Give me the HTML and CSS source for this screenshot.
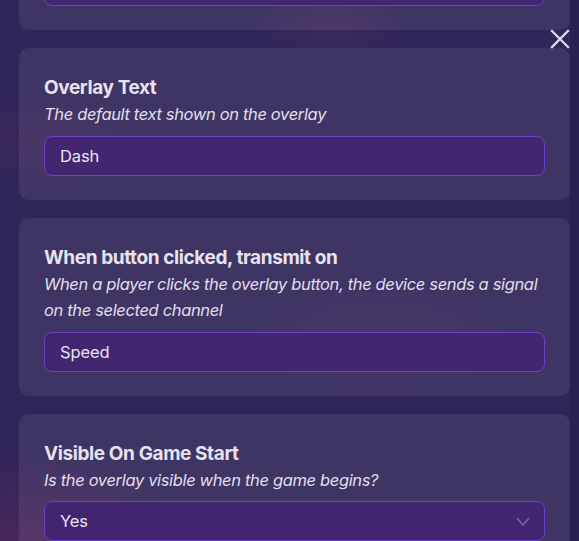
FILE: index.html
```html
<!DOCTYPE html>
<html lang="en">
<head>
<meta charset="utf-8">
<title>Overlay settings</title>
<link rel="stylesheet" href="styles.css">
</head>
<body>
<div class="page">
  <div class="scroll">
    <div class="list">
      <section class="card">
        <div class="field"></div>
      </section>
      <section class="card">
        <h2 class="title">Overlay Text</h2>
        <p class="desc">The default text shown on the overlay</p>
        <div class="field">Dash</div>
      </section>
      <section class="card">
        <h2 class="title">When button clicked, transmit on</h2>
        <p class="desc">When a player clicks the overlay button, the device sends a signal on the selected channel</p>
        <div class="field">Speed</div>
      </section>
      <section class="card">
        <h2 class="title">Visible On Game Start</h2>
        <p class="desc">Is the overlay visible when the game begins?</p>
        <div class="field select">
          <span>Yes</span>
          <svg class="chev" width="14" height="9" viewBox="0 0 14 9"><path d="M1 1 L7 8 L13 1" fill="none" stroke="currentColor" stroke-width="1.4"/></svg>
        </div>
      </section>
    </div>
  </div>
  <div class="track"></div>
  <button class="close" aria-label="Close">
    <svg width="20" height="20" viewBox="0 0 20 20"><path d="M2 2 L18 18 M18 2 L2 18" stroke="currentColor" stroke-width="2.3" stroke-linecap="square"/></svg>
  </button>
</div>
</body>
</html>
```
FILE: styles.css
```css
* { box-sizing: border-box; }
html, body { margin: 0; padding: 0; }
body {
  width: 579px;
  height: 541px;
  overflow: hidden;
  font-family: Inter, "Noto Sans", sans-serif;
  background: #30265a;
}
.page {
  position: relative;
  display: flex;
  height: 541px;
  overflow: hidden;
  background:
    radial-gradient(ellipse 80px 30px at 330px 24px, rgba(120, 60, 100, 0.22), transparent),
    radial-gradient(ellipse 140px 60px at 380px 340px, rgba(110, 50, 90, 0.2), transparent),
    radial-gradient(ellipse 160px 90px at 30px 540px, rgba(110, 40, 90, 0.45), transparent),
    radial-gradient(ellipse 120px 50px at 40px 140px, rgba(110, 50, 90, 0.18), transparent),
    #30265a;
}
.scroll {
  flex: 1;
  padding-left: 19px;
}
.track {
  width: 9px;
  background: #2b2150;
}
.list {
  margin-top: -61px;
  display: flex;
  flex-direction: column;
  gap: 18px;
}
.card {
  background: rgba(255, 255, 255, 0.07);
  border-radius: 10px;
  padding: 27px 25px 24px 25px;
}
.title {
  margin: 0;
  font-size: 19px;
  line-height: 26px;
  font-weight: 700;
  letter-spacing: -0.4px;
  color: #e6e2ee;
}
.desc {
  margin: 0;
  font-size: 16.5px;
  line-height: 26.5px;
  font-style: italic;
  letter-spacing: -0.35px;
  color: #e2deea;
}
.field {
  margin-top: 8px;
  height: 40px;
  border: 1px solid #6b40c6;
  border-radius: 8px;
  background: #42266f;
  color: #e8e4f2;
  font-size: 16.5px;
  letter-spacing: -0.1px;
  padding: 0 15px;
  display: flex;
  align-items: center;
  justify-content: space-between;
}
.card:first-child .field { margin-top: 0; }
.chev {
  color: #7e66ad;
  margin-right: -1px;
}
.close {
  position: absolute;
  left: 550px;
  top: 29px;
  width: 20px;
  height: 19px;
  padding: 0;
  border: 0;
  background: none;
  color: #dcd8e6;
  display: flex;
}
```
